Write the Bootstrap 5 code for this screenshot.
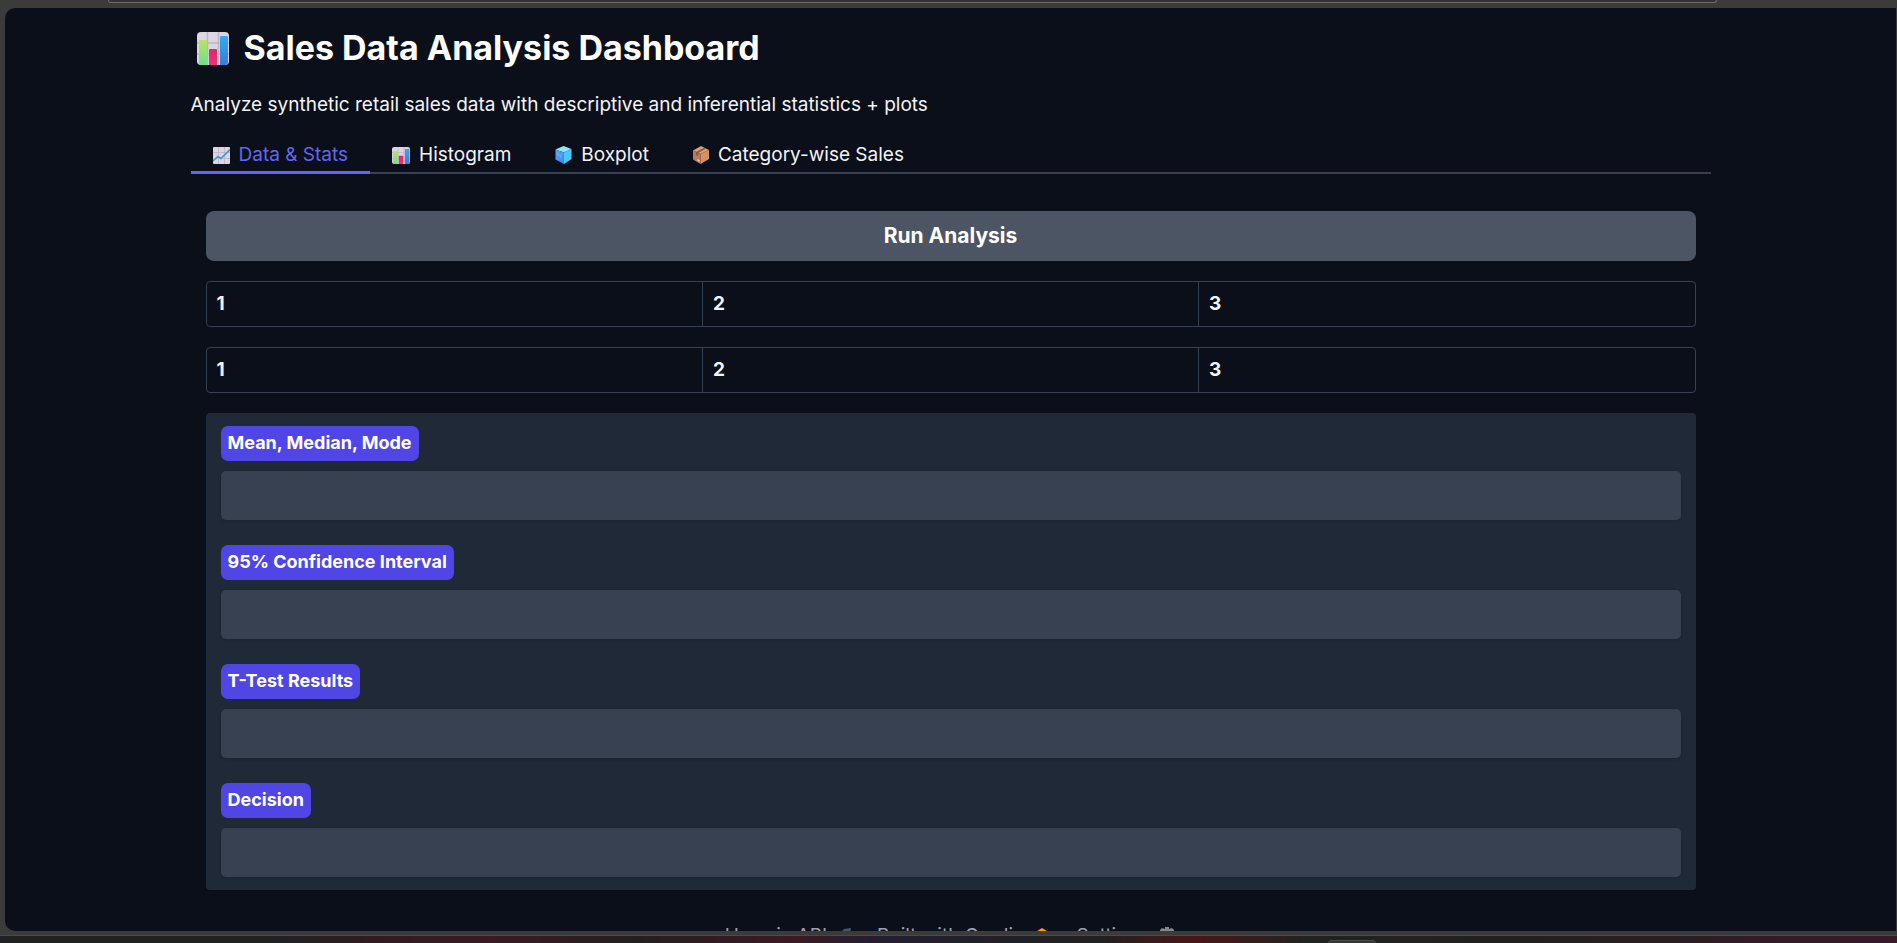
<!DOCTYPE html>
<html lang="en" data-bs-theme="dark">
<head>
<meta charset="utf-8">
<meta name="viewport" content="width=device-width, initial-scale=1">
<title>Sales Data Analysis Dashboard</title>
<link href="https://cdn.jsdelivr.net/npm/bootstrap@5.3.0/dist/css/bootstrap.min.css" rel="stylesheet">
<style>
  :root { --app-line: #374151; --app-accent: #6366f1; }
  body { background: #3b3b3b; color: #f3f4f6; font-family: Inter, "Open Sans", sans-serif; font-size: 19px; line-height: 24px; }
  .window-top { height: 8px; padding: 0 180px 0 108px; }
  .address-edge { height: 3px; background: #333; border: 1px solid #6b6b6b; border-top: 0; border-radius: 0 0 12px 12px; }
  .window-bottom { height: 5px; border-bottom: 1px solid #4a4a4a; }
  .desk-strip { height: 7px; padding-top: 4px; background: linear-gradient(90deg, #202222 15%, #2b1d22 18%, #3a1a24 26%, #241f20 33%, #3a1a24 42%, #251e30 46%, #1f2123 54%, #212121 58%, #4a1616 63%, #202322 69%, #22201f 80%, #381a28 100%); }
  .desk-tile { width: 48px; height: 3px; margin-left: 70%; background: #353535; border-top: 1px solid #4c4c4c; border-radius: 4px 4px 0 0; }
  .page-view { background: #0b0f19; margin: 0 1px 0 5px; border-radius: 10px 0 0 10px; min-height: 0; }
  .page-body { max-width: 1520px; padding-top: 20px; }
  .page-title { font-size: 34px; line-height: 40px; font-weight: 700; gap: 15px; padding-left: 6px; margin-bottom: 25px; }
  .page-intro { margin-bottom: 16px; }
  .tab-strip { border-bottom: 2px solid var(--app-line); --bs-nav-link-color: #f3f4f6; --bs-nav-link-hover-color: #fff; }
  .tab-strip .nav-link { padding: 10px 22px 4px; border: 0; border-bottom: 3px solid transparent; border-radius: 0; margin-bottom: -2px; gap: 9px; background: none; }
  .tab-strip .nav-link.active { color: var(--app-accent); border-bottom-color: var(--app-accent); background: none; }
  .panel-body { padding: 37px 15px 0; }
  .panel-stack { gap: 20px; }
  .btn-run { --bs-btn-bg: #4b5563; --bs-btn-color: #fff; --bs-btn-hover-bg: #5b6573; --bs-btn-hover-color: #fff; --bs-btn-border-width: 0; --bs-btn-border-radius: 8px; --bs-btn-font-size: 21px; --bs-btn-font-weight: 700; --bs-btn-line-height: 26px; --bs-btn-padding-y: 12px; }
  .grid-frame { border: 1px solid var(--app-line); border-radius: 4px; overflow: hidden; }
  .grid-frame table { table-layout: fixed; }
  .grid-frame th { padding: 10px; font-weight: 700; border-right: 1px solid var(--app-line); }
  .grid-frame th:last-child { border-right: 0; }
  .result-group { background: #1f2937; border-radius: 4px; padding: 13px 15px; gap: 25px; }
  .result-tag { background: #4f46e5; color: #fff; border-radius: 7px; padding: 5px 7px 6px; font-size: 18px; font-weight: 700; margin-bottom: 10px; }
  .result-box { background: #374151; border: 0; border-radius: 5px; height: 49px; box-shadow: 0 1px 3px rgba(0,0,0,.15); }
  .page-foot { padding-top: 34px; gap: 25px; }
  .page-foot a { color: #9ca3af; gap: 9px; }
</style>
</head>
<body class="vh-100 overflow-hidden d-flex flex-column">
<svg class="position-absolute" width="0" height="0" aria-hidden="true">
  <defs>
    <linearGradient id="gGreen" x1="0" y1="0" x2="0" y2="1"><stop offset="0" stop-color="#b8e45c"/><stop offset="1" stop-color="#6be08c"/></linearGradient>
    <linearGradient id="gPink" x1="0" y1="0" x2="0" y2="1"><stop offset="0" stop-color="#d92b66"/><stop offset="1" stop-color="#f0307f"/></linearGradient>
    <linearGradient id="gBlue" x1="0" y1="0" x2="0" y2="1"><stop offset="0" stop-color="#33a8f5"/><stop offset="1" stop-color="#3d7cd0"/></linearGradient>
    <linearGradient id="gIce" x1="0" y1="0" x2="1" y2="1"><stop offset="0" stop-color="#5aa7f2"/><stop offset="1" stop-color="#3585f0"/></linearGradient>
  </defs>
</svg>

<div class="window-top flex-shrink-0"><div class="address-edge"></div></div>

<div class="page-view flex-grow-1 overflow-hidden">
  <main class="page-body w-100 mx-auto">
    <h1 class="page-title d-flex align-items-center">
      <svg width="32" height="33" viewBox="0 0 32 33" aria-hidden="true">
        <rect width="32" height="33" rx="4" fill="#dcd5e2"/>
        <path d="M10.500 0V33M21.500 0V33M0 11H32M0 22H32" stroke="#bdb4c6" stroke-width="1.500"/>
        <path d="M2 9q0-1 1-1h6q1 0 1 1v24H4q-2 0-2-2z" fill="url(#gGreen)"/>
        <path d="M12 18q0-1 1-1h6q1 0 1 1v15h-8z" fill="url(#gPink)"/>
        <path d="M23 5q0-1 1-1h6q1 0 1 1v25q0 3-3 3h-5z" fill="url(#gBlue)"/>
      </svg>
      Sales Data Analysis Dashboard
    </h1>
    <p class="page-intro">Analyze synthetic retail sales data with descriptive and inferential statistics + plots</p>

    <ul class="nav tab-strip" role="tablist">
      <li class="nav-item" role="presentation">
        <button class="nav-link active d-flex align-items-center" type="button" role="tab" aria-selected="true" data-bs-toggle="tab" data-bs-target="#stats">
          <svg width="17" height="17" viewBox="0 0 17 17" aria-hidden="true">
            <rect width="17" height="17" rx="1" fill="#dcd5e2"/>
            <path d="M5.500 0V17M11.500 0V17M0 5.500H17M0 11.500H17" stroke="#c3bacb"/>
            <path d="M0 14L5 9.500L8 11.500L17 2.500" fill="none" stroke="#3d96d8" stroke-width="1.600"/>
          </svg>Data &amp; Stats</button>
      </li>
      <li class="nav-item" role="presentation">
        <button class="nav-link d-flex align-items-center" type="button" role="tab" aria-selected="false">
          <svg width="18" height="17" viewBox="0 0 32 33" preserveAspectRatio="none" aria-hidden="true">
            <rect width="32" height="33" rx="4" fill="#dcd5e2"/>
            <path d="M10.500 0V33M21.500 0V33M0 11H32M0 22H32" stroke="#bdb4c6" stroke-width="1.500"/>
            <path d="M2 9q0-1 1-1h6q1 0 1 1v24H4q-2 0-2-2z" fill="url(#gGreen)"/>
            <path d="M12 18q0-1 1-1h6q1 0 1 1v15h-8z" fill="url(#gPink)"/>
            <path d="M23 5q0-1 1-1h6q1 0 1 1v25q0 3-3 3h-5z" fill="url(#gBlue)"/>
          </svg>Histogram</button>
      </li>
      <li class="nav-item" role="presentation">
        <button class="nav-link d-flex align-items-center" type="button" role="tab" aria-selected="false">
          <svg width="17" height="18" viewBox="0 0 17 18" aria-hidden="true">
            <path d="M0.500 3.500L8.500 0L16.500 3L9 6.500z" fill="#8be6f7"/>
            <path d="M0.500 3.500L9 6.500V18L0.500 13.500z" fill="url(#gIce)"/>
            <path d="M9 6.500L16.500 3V13L9 18z" fill="#45c8fb"/>
            <path d="M2.500 7l2 3M6 8v4" stroke="#78bdf5" stroke-width=".8"/>
          </svg>Boxplot</button>
      </li>
      <li class="nav-item" role="presentation">
        <button class="nav-link d-flex align-items-center" type="button" role="tab" aria-selected="false">
          <svg width="16" height="18" viewBox="0 0 16 18" aria-hidden="true">
            <path d="M0 4.500L8 0L16 4L7.500 8z" fill="#d9a06f"/>
            <path d="M0 4.500L7.500 8V18L0 13.500z" fill="#b97a60"/>
            <path d="M7.500 8L16 4V13L7.500 18z" fill="#d49261"/>
            <path d="M3 6L11 1.700L13 2.600L5.200 6.900V10L3 9z" fill="#8f5643"/>
            <path d="M4.500 13l2 1v2l-2-1z" fill="#e2cfd0"/>
          </svg>Category-wise Sales</button>
      </li>
    </ul>

    <section id="stats" class="panel-body" role="tabpanel">
      <div class="panel-stack d-flex flex-column">
        <button class="btn btn-run w-100" type="button">Run Analysis</button>
        <div class="grid-frame">
          <table class="w-100"><thead><tr><th scope="col">1</th><th scope="col">2</th><th scope="col">3</th></tr></thead></table>
        </div>
        <div class="grid-frame">
          <table class="w-100"><thead><tr><th scope="col">1</th><th scope="col">2</th><th scope="col">3</th></tr></thead></table>
        </div>
        <div class="result-group d-flex flex-column">
          <div class="d-flex flex-column align-items-start">
            <label class="result-tag" for="mmm">Mean, Median, Mode</label>
            <input class="result-box form-control" id="mmm" type="text" readonly>
          </div>
          <div class="d-flex flex-column align-items-start">
            <label class="result-tag" for="ci">95% Confidence Interval</label>
            <input class="result-box form-control" id="ci" type="text" readonly>
          </div>
          <div class="d-flex flex-column align-items-start">
            <label class="result-tag" for="ttest">T-Test Results</label>
            <input class="result-box form-control" id="ttest" type="text" readonly>
          </div>
          <div class="d-flex flex-column align-items-start">
            <label class="result-tag" for="decision">Decision</label>
            <input class="result-box form-control" id="decision" type="text" readonly>
          </div>
        </div>
      </div>
    </section>
  </main>

  <footer class="page-foot d-flex justify-content-center">
    <a class="d-flex align-items-center text-decoration-none" href="#api">Use via API
      <svg width="16" height="18" viewBox="0 0 16 18" aria-hidden="true"><path d="M1 9L8 2L15 1L14 7L7 14z" fill="#4b5563"/></svg></a>
    <a class="d-flex align-items-center text-decoration-none" href="#gradio">Built with Gradio
      <svg width="18" height="18" viewBox="0 0 18 18" aria-hidden="true"><path d="M1 6L9 1L17 6V11L9 16L1 11z" fill="#ff9c00"/></svg></a>
    <a class="d-flex align-items-center text-decoration-none" href="#settings">Settings
      <svg width="18" height="18" viewBox="0 0 18 18" aria-hidden="true"><path d="M7 0h4v2l3-1 2 2v8l-3 4H5l-3-4V3l2-2 3 1z" fill="#888"/></svg></a>
  </footer>
</div>

<div class="window-bottom flex-shrink-0"></div>
<div class="desk-strip flex-shrink-0"><div class="desk-tile"></div></div>
<script src="https://cdn.jsdelivr.net/npm/bootstrap@5.3.0/dist/js/bootstrap.bundle.min.js"></script>
</body>
</html>
